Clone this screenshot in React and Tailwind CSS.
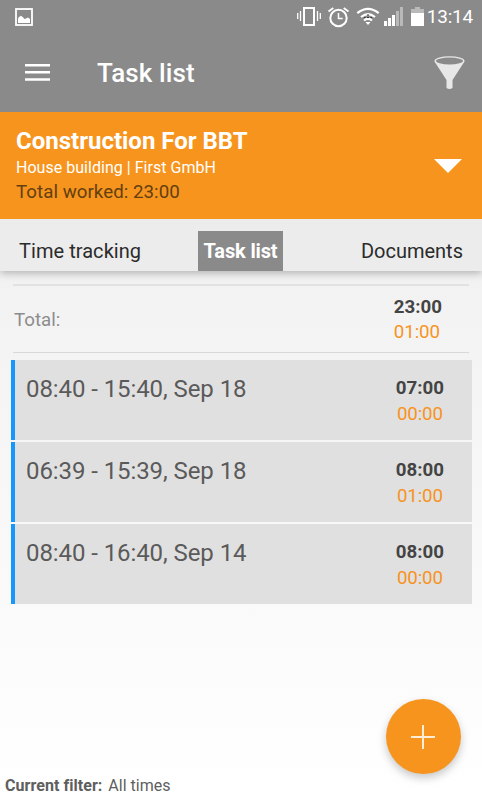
import React from 'react';

const entries = [
  { label: '08:40 - 15:40, Sep 18', worked: '07:00', pause: '00:00' },
  { label: '06:39 - 15:39, Sep 18', worked: '08:00', pause: '01:00' },
  { label: '08:40 - 16:40, Sep 14', worked: '08:00', pause: '00:00' },
];

function StatusBar() {
  return (
    <div className="flex h-[33px] items-center justify-between pl-[15px] pr-[9px]">
      <svg className="h-[18px] w-[18px]" viewBox="0 0 18 18" fill="none">
        <rect x="1" y="1" width="16" height="16" stroke="#fff" strokeWidth="1.800" />
        <path d="M3 15V10.500L4 9L6 7.700L8 9.300L9.500 11L11 10.500L13 9.500L15 11V15Z" fill="#fff" />
      </svg>
      <div className="flex items-center">
        <svg className="h-[22px] w-[106px]" viewBox="0 0 106 22" fill="none" stroke="#fff">
          <path d="M.7 7v6M3.500 5v10M20.500 5v10M23.300 7v6" strokeWidth="1.300" />
          <rect x="7" y="2" width="10" height="17" strokeWidth="2" />
          <circle cx="41.500" cy="12" r="8.200" strokeWidth="2" />
          <path d="M41.500 7v5.500h4.200" strokeWidth="1.500" />
          <path d="M31.500 5.500L36.300 2M51.500 5.500L46.700 2" strokeWidth="1.800" />
          <path d="M60.300 7.200Q71 -1.400 81.700 7.200M64 11Q71 5.200 78 11M67 14.500Q71 11 75 14.500" strokeWidth="2.200" />
          <path d="M68.500 16H73.500L71 19Z" fill="#fff" stroke="none" />
          <path d="M71 8v2M67 11.500h1.500M73.500 11.500H75M70 11.500h2" stroke="#333" strokeWidth="1" />
          <g stroke="none">
            <path d="M87 15h3v5h-3zM91 12h3v8h-3zM95 9h3v11h-3z" fill="#fff" />
            <path d="M99 5h3v15h-3zM103 1h3v19h-3z" fill="#b9b9b9" />
          </g>
        </svg>
        <svg className="ml-[8px] h-[22px] w-[13px]" viewBox="0 0 13 22">
          <path d="M4 1h5v2h4v4H0V3h4z" fill="#b9b9b9" />
          <path d="M0 7h13v13H0z" fill="#fff" />
        </svg>
        <span className="ml-[3px] text-[19px] leading-[22px] tracking-[-0.2px] text-white">13:14</span>
      </div>
    </div>
  );
}

function Times({ worked, pause, centered = false }) {
  return (
    <div className={`text-[18.7px] leading-[25.5px] ${centered ? 'text-center' : ''}`}>
      <div className="font-bold text-[#444]">{worked}</div>
      <div className="tracking-[-0.1px] text-[#f7931e]">{pause}</div>
    </div>
  );
}

export default function App() {
  return (
    <div className="flex h-[800px] w-[482px] flex-col overflow-hidden bg-linear-to-b from-[#ebebeb] to-white font-['Roboto',sans-serif]">
      <header className="h-[112px] shrink-0 bg-[#8a8a8a]">
        <StatusBar />
        <div className="flex h-[79px] items-center pl-[25px] pr-[17px]">
          <svg className="h-[18px] w-[25px]" viewBox="0 0 25 18" fill="#fff">
            <path d="M0 0h25v2.500H0zM0 7h25v2.500H0zM0 14.300h25v2.500H0z" />
          </svg>
          <h1 className="ml-[47px] text-[26px] font-medium leading-[32px] tracking-[0.1px] text-white">Task list</h1>
          <svg className="ml-auto h-[34px] w-[31px]" viewBox="0 0 31 34">
            <path d="M.5 5.500L12.500 24V32Q15.500 34 18.500 32V24L30.500 5.500Z" fill="#e8e8e8" />
            <ellipse cx="15.500" cy="5" rx="14.300" ry="4.100" fill="#8a8a8a" stroke="#e8e8e8" strokeWidth="1.400" />
          </svg>
        </div>
      </header>

      <section className="z-10 flex h-[107px] shrink-0 items-center justify-between bg-[#f7941e] pl-4 pr-[20px]">
        <div>
          <h2 className="text-[24px] font-bold leading-[27px] text-white">Construction For BBT</h2>
          <p className="text-[16px] leading-[25px] tracking-[0.03px] text-white">House building | First GmbH</p>
          <p className="text-[18.7px] leading-[24px] tracking-[0.05px] text-[#63400f]">Total worked: 23:00</p>
        </div>
        <svg className="h-[14px] w-[28px]" viewBox="0 0 28 14" fill="#fff">
          <path d="M0 0h28L14 14z" />
        </svg>
      </section>

      <nav className="flex h-[52px] shrink-0 items-end bg-[#ececec] pl-[19px] pr-[19px] text-[20px] leading-[40px] text-[#2b2b2b] shadow-[0_2px_8px_rgba(0,0,0,0.28)]">
        <span className="w-[179px] tracking-[0.05px]">Time tracking</span>
        <span className="w-[85px] bg-[#8a8a8a] text-center font-bold tracking-[-0.15px] text-white">Task list</span>
        <span className="ml-auto">Documents</span>
      </nav>

      <main className="flex-1 pl-[11px] pr-[10px] pt-[13px]">
        <div className="ml-[2px] mr-[3px] flex h-[69px] items-center justify-between border-b border-t-2 border-b-[#d8d8d8] border-t-[#e2e2e2] pr-[27px] pt-[2px]">
          <span className="pl-px text-[18.7px] text-[#8c8c8c]">Total:</span>
          <Times worked="23:00" pause="01:00" />
        </div>
        <ul className="mt-[7px] flex flex-col gap-[2px]">
          {entries.map((e) => (
            <li key={e.label} className="flex h-[80px] justify-between border-l-4 border-[#1597fb] bg-[#e0e0e0] pl-[11px] pr-[28px] pt-[16px]">
              <span className="-mt-px text-[24px] leading-[28px] tracking-[-0.08px] text-[#5a5a5a]">{e.label}</span>
              <Times worked={e.worked} pause={e.pause} centered />
            </li>
          ))}
        </ul>
      </main>

      <footer className="flex shrink-0 flex-col">
        <button aria-label="Add" className="mr-[21px] flex h-[75px] w-[75px] items-center justify-center self-end rounded-full bg-[#f7941e] shadow-[0_4px_9px_rgba(0,0,0,0.22)]">
          <svg className="mr-px h-[24px] w-[24px]" viewBox="0 0 24 24" stroke="#fdeed8" strokeWidth="2">
            <path d="M0 12h24M12 0v24" />
          </svg>
        </button>
        <p className="h-[26px] pl-[5px] text-[16px] leading-[24px] text-[#5e5e5e]">
          <b className="mr-[2px] tracking-[0.05px]">Current filter:</b> All times
        </p>
      </footer>
    </div>
  );
}
